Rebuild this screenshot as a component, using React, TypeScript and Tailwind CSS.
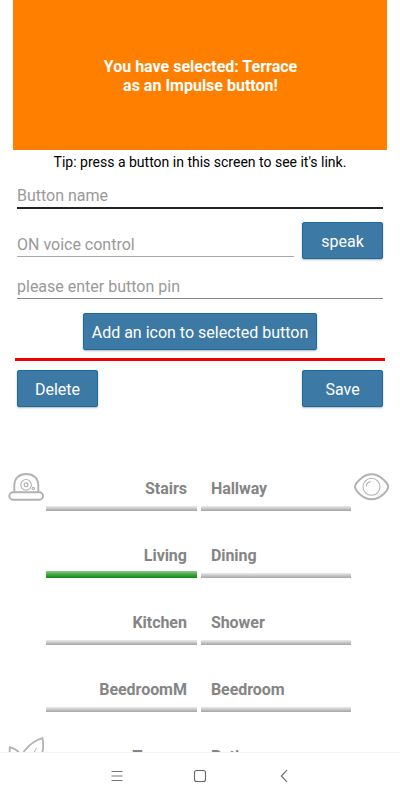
import React from "react";

const button =
  "flex items-center justify-center rounded-[2px] bg-[#3d79a5] pt-[2px] text-[16px] text-white border border-[#1a6c9f] shadow-[0_1px_2px_rgba(0,0,0,0.3)]";

function CameraIcon() {
  return (
    <svg width="36" height="29" viewBox="0 0 36 29" fill="none" stroke="#b2b2b2">
      <path d="M6.3 19V12.5C6.3 5 11.4 1 18.3 1S30.3 5 30.3 12.5V19" strokeWidth="1.9" />
      <rect x="1.3" y="19.3" width="33.7" height="7.4" rx="3.7" strokeWidth="1.9" />
      <circle cx="18.1" cy="11.8" r="5.3" strokeWidth="1.1" />
      <circle cx="18.1" cy="11.8" r="1.9" strokeWidth="1.2" />
      <circle cx="25.3" cy="15.6" r="1.2" strokeWidth="1.1" />
    </svg>
  );
}

function EyeIcon() {
  return (
    <svg width="36" height="29" viewBox="0 0 36 29" fill="none" stroke="#b2b2b2">
      <path d="M1 13.8C1 10.7 8.5 1.3 17.6 1.3S34.2 10.7 34.2 13.8S26.8 26.3 17.6 26.3S1 16.9 1 13.8Z" strokeWidth="2" />
      <circle cx="17.5" cy="13.8" r="8.5" strokeWidth="1.1" />
      <path d="M12.3 13.5C12.3 10.8 14.1 8.9 16.9 8.7" strokeWidth="1.1" />
    </svg>
  );
}

function LeafIcon() {
  return (
    <svg width="36" height="30" viewBox="0 0 36 30" fill="none" stroke="#b2b2b2">
      <path d="M15.5 15C20 9 26 3.5 34.5 1.2C35.8 8 35.5 15 32 22" strokeWidth="1.8" />
      <path d="M3 24C1.8 19 1.5 14 1.8 10.2C5.2 11 8 12.6 10.8 15" strokeWidth="1.8" />
      <path d="M26 16C26.4 14.5 27.2 12.8 28.5 11.2" strokeWidth="1" />
    </svg>
  );
}

function Room({ name, right, active }: { name: string; right?: boolean; active?: boolean }) {
  return (
    <div
      className={
        "flex h-[67px] flex-1 flex-col justify-end text-[16px] font-bold leading-5 tracking-[-0.05px] text-[#858585] " +
        (right ? "text-left" : "text-right")
      }
    >
      <div className="mb-[5px] px-[10px]">{name}</div>
      <div className="flex h-[7px] items-end">
        <div
          className={
            active
              ? "h-[7px] w-full bg-linear-to-b from-[#8bca8b] via-[#41a441] to-[#0b860b]"
              : "h-[5px] w-full bg-linear-to-b from-[#ececec] to-[#a4a4a4]"
          }
        />
      </div>
    </div>
  );
}

const rooms: [string, string][] = [
  ["Stairs", "Hallway"],
  ["Living", "Dining"],
  ["Kitchen", "Shower"],
  ["BeedroomM", "Beedroom"],
  ["Terrace", "Patio"],
];

export default function App() {
  return (
    <div className="flex h-[800px] w-[400px] flex-col overflow-hidden bg-white font-['Roboto',sans-serif]">
      <main className="h-[752px] shrink-0 overflow-hidden">
        <header className="mx-[13px] flex h-[149.5px] items-center justify-center bg-[#ff8000] pl-px pt-[2px] text-center text-[16px] font-bold leading-[19px] text-white">
          <p>
            You have selected: Terrace
            <br />
            as an Impulse button!
          </p>
        </header>
        <p className="h-[28.5px] pt-[2px] text-center text-[14px] leading-5 text-black">
          Tip: press a button in this screen to see it's link.
        </p>
        <section className="mx-[17px] text-[16px] text-[#999]">
          <div className="h-[31px] border-b-2 border-[#222] pt-[6px] leading-6">Button name</div>
          <div className="mt-[13px] flex justify-between">
            <div className="h-[35px] w-[277px] border-b border-[#aaa] pt-[11px] leading-6">ON voice control</div>
            <button className={button + " h-[37px] w-[81px]"}>speak</button>
          </div>
          <div className="h-[40px] border-b border-[#888] pt-[16px] leading-6">please enter button pin</div>
        </section>
        <div className="mt-[14px] flex justify-center">
          <button className={button + " h-[37px] w-[234px]"}>Add an icon to selected button</button>
        </div>
        <div className="mx-[15px] mt-[8px] h-[3px] bg-[#f40000]" />
        <div className="mx-[17px] mt-[9px] flex justify-between">
          <button className={button + " h-[37px] w-[81px]"}>Delete</button>
          <button className={button + " h-[37px] w-[81px]"}>Save</button>
        </div>
        <section className="mt-[37px]">
          {rooms.map(([left, right], i) => (
            <div key={left} className="flex h-[67px]">
              <div className={"w-[46.4px] shrink-0 pl-[8px] " + (i === 4 ? "pt-[25px]" : "pt-[29px]")}>
                {i === 0 && <CameraIcon />}
                {i === 4 && <LeafIcon />}
              </div>
              <div className="flex w-[305px] shrink-0 gap-[4px]">
                <Room name={left} active={i === 1} />
                <Room name={right} right />
              </div>
              <div className="pl-[3px] pt-[29px]">{i === 0 && <EyeIcon />}</div>
            </div>
          ))}
        </section>
      </main>
      <nav className="flex h-[48px] items-center justify-center gap-[70px] border-t border-[#f3f3f3] pb-[1px]">
        <svg width="13" height="14" viewBox="0 0 13 14" stroke="#777" strokeWidth="1">
          <path d="M1.5 2.5H12.5M1.5 7H12.5M1.5 11.5H12.5" />
        </svg>
        <svg width="14" height="14" viewBox="0 0 14 14" fill="none" stroke="#666" strokeWidth="1.1">
          <rect x="1.5" y="1.5" width="11" height="11" rx="2" />
        </svg>
        <svg width="13" height="14" viewBox="0 0 13 14" fill="none" stroke="#666" strokeWidth="1.1">
          <path d="M10 1.2L4.3 7L10 12.8" />
        </svg>
      </nav>
    </div>
  );
}
